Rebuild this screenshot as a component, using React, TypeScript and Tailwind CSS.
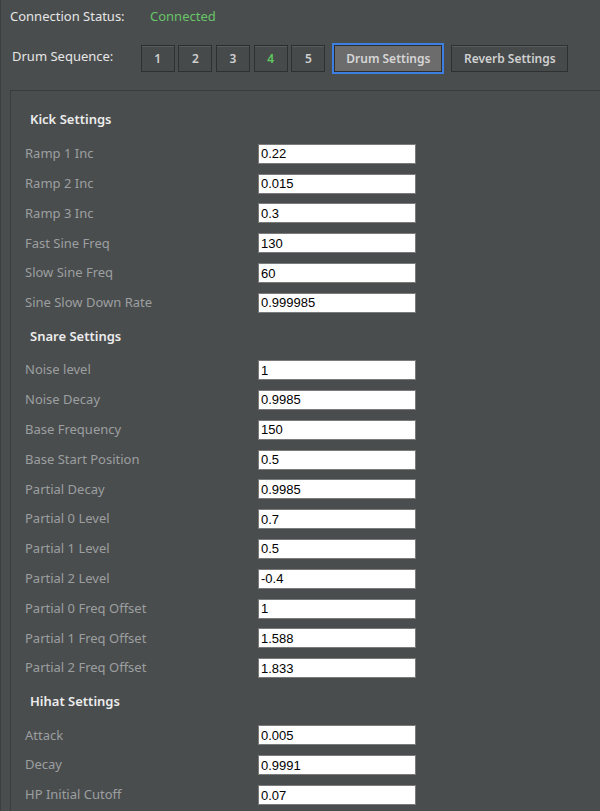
import React from "react";

const kick: [string, string][] = [
  ["Ramp 1 Inc", "0.22"],
  ["Ramp 2 Inc", "0.015"],
  ["Ramp 3 Inc", "0.3"],
  ["Fast Sine Freq", "130"],
  ["Slow Sine Freq", "60"],
  ["Sine Slow Down Rate", "0.999985"],
];
const snare: [string, string][] = [
  ["Noise level", "1"],
  ["Noise Decay", "0.9985"],
  ["Base Frequency", "150"],
  ["Base Start Position", "0.5"],
  ["Partial Decay", "0.9985"],
  ["Partial 0 Level", "0.7"],
  ["Partial 1 Level", "0.5"],
  ["Partial 2 Level", "-0.4"],
  ["Partial 0 Freq Offset", "1"],
  ["Partial 1 Freq Offset", "1.588"],
  ["Partial 2 Freq Offset", "1.833"],
];
const hihat: [string, string][] = [
  ["Attack", "0.005"],
  ["Decay", "0.9991"],
  ["HP Initial Cutoff", "0.07"],
];

function Row({ label, value }: { label: string; value: string }) {
  return (
    <div className="flex h-[29.8px] items-center">
      <div className="w-[233px] shrink-0 text-[13px] text-[#9c9fa0]">{label}</div>
      <input
        readOnly
        value={value}
        className="h-[20px] w-[158px] border border-[#7a7a7a] bg-white px-[2px] text-[13px] text-black outline-none"
        style={{ fontFamily: '"Liberation Sans", Arial, sans-serif' }}
      />
    </div>
  );
}

function Header({ children, first }: { children: React.ReactNode; first?: boolean }) {
  return (
    <div
      className={`flex h-[20px] items-center pl-[5px] text-[13px] font-semibold text-[#ececec] ${
        first ? "mb-[9px]" : "mt-[9px] mb-[8.5px]"
      }`}
    >
      {children}
    </div>
  );
}

function SeqButton({ n, active }: { n: string; active?: boolean }) {
  return (
    <button
      className={`flex h-[27px] w-[34px] items-center justify-center border border-[#2e3031] border-t-[#2a2c2d] bg-[#474a4b] text-[12px] font-semibold shadow-[inset_0_1px_0_#5a5d5e] ${
        active ? "text-[#5fc85f]" : "text-[#cfd0d0]"
      }`}
    >
      {n}
    </button>
  );
}

export default function App() {
  return (
    <div
      className="h-[811px] w-[600px] overflow-hidden border-l border-[#3c3f40] bg-[#4a4d4e]"
      style={{ fontFamily: '"Noto Sans", "Open Sans", sans-serif' }}
    >
      <div className="flex h-[34px] items-center pl-[9px] text-[13px]">
        <span className="w-[140px] text-[#e6e6e6]">Connection Status:</span>
        <span className="text-[#68c468]">Connected</span>
      </div>
      <div className="flex h-[45px] items-start pt-[9px] text-[13px]">
        <span className="mt-[4px] w-[139.7px] shrink-0 pl-[11px] text-[#e6e6e6]">Drum Sequence:</span>
        <div className="mt-[2px] flex gap-[3.67px]">
          <SeqButton n="1" />
          <SeqButton n="2" />
          <SeqButton n="3" />
          <SeqButton n="4" active />
          <SeqButton n="5" />
        </div>
        <button className="ml-[7px] flex h-[31px] w-[112px] items-center justify-center border-2 border-[#3d7fe0] bg-[#6c6c6c] text-[12px] font-semibold text-[#d6d6d6] shadow-[inset_0_0_0_1px_#2c2e2f]">
          Drum Settings
        </button>
        <button className="ml-[7px] mt-[2px] flex h-[27px] w-[117px] items-center justify-center border border-[#2e3031] bg-[#474a4b] text-[12px] font-semibold text-[#cfd0d0] shadow-[inset_0_1px_0_#5a5d5e]">
          Reverb Settings
        </button>
      </div>
      <div className="ml-[9px] mt-[11px] h-[900px] border-l border-t border-[#3a3d3e] pl-[14px] pt-[19px]">
        <Header first>Kick Settings</Header>
        {kick.map(([l, v]) => (
          <Row key={l} label={l} value={v} />
        ))}
        <Header>Snare Settings</Header>
        {snare.map(([l, v]) => (
          <Row key={l} label={l} value={v} />
        ))}
        <Header>Hihat Settings</Header>
        {hihat.map(([l, v]) => (
          <Row key={l} label={l} value={v} />
        ))}
      </div>
    </div>
  );
}
